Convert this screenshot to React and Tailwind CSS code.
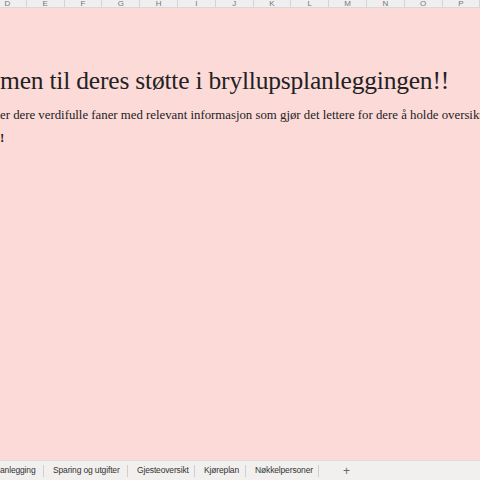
const cols = ['D', 'E', 'F', 'G', 'H', 'I', 'J', 'K', 'L', 'M', 'N', 'O', 'P'];
const tabs = [
  { name: 'anlegging', w: 'w-[44px]', pad: 'pl-0' },
  { name: 'Sparing og utgifter', w: 'w-[84px]', pad: 'pl-[9px]' },
  { name: 'Gjesteoversikt', w: 'w-[67px]', pad: 'pl-[9px]' },
  { name: 'Kjøreplan', w: 'w-[51px]', pad: 'pl-[9px]' },
  { name: 'Nøkkelpersoner', w: 'w-[73px]', pad: 'pl-[9px]' },
];

export default function App() {
  return (
    <div className="w-[480px] h-[480px] flex flex-col overflow-hidden bg-[#fcdad8]" style={{ fontFamily: '"Liberation Sans", Arial, sans-serif' }}>
      {/* column headers */}
      <div className="h-[8px] flex bg-[#efefef] border-b border-[#d8d8d8] -ml-[11px] overflow-hidden">
        {cols.map((c) => (
          <div key={c} className="w-[37.8px] shrink-0 border-r border-[#d4d4d4] flex items-end justify-center text-[8px] leading-[8px] text-[#777]">
            <span className="-mb-[1px]">{c}</span>
          </div>
        ))}
      </div>

      {/* sheet content */}
      <div className="flex-1 overflow-hidden whitespace-nowrap text-[#222]" style={{ fontFamily: '"Liberation Serif", "Times New Roman", serif' }}>
        <div className="mt-[55px] text-[25.5px] leading-[36px] tracking-[-0.2px]">men til deres støtte i bryllupsplanleggingen!!</div>
        <div className="mt-[8px] text-[12.8px] leading-[16px]">er dere verdifulle faner med relevant informasjon som gjør det lettere for dere å holde oversikt</div>
        <div className="mt-[7px] text-[13px] leading-[16px] font-bold">!</div>
      </div>

      {/* sheet tabs */}
      <div className="h-[20px] flex items-center bg-[#f1f0ee] border-t border-[#dedede] text-[8.5px] tracking-[-0.15px] text-[#333]">
        {tabs.map((t) => (
          <div key={t.name} className={`flex items-center h-[12px] border-r border-[#cfcfcf] shrink-0 ${t.w} ${t.pad}`}>
            {t.name}
          </div>
        ))}
        <div className="ml-[24px] text-[12px] text-[#666] leading-none">+</div>
      </div>
    </div>
  );
}
